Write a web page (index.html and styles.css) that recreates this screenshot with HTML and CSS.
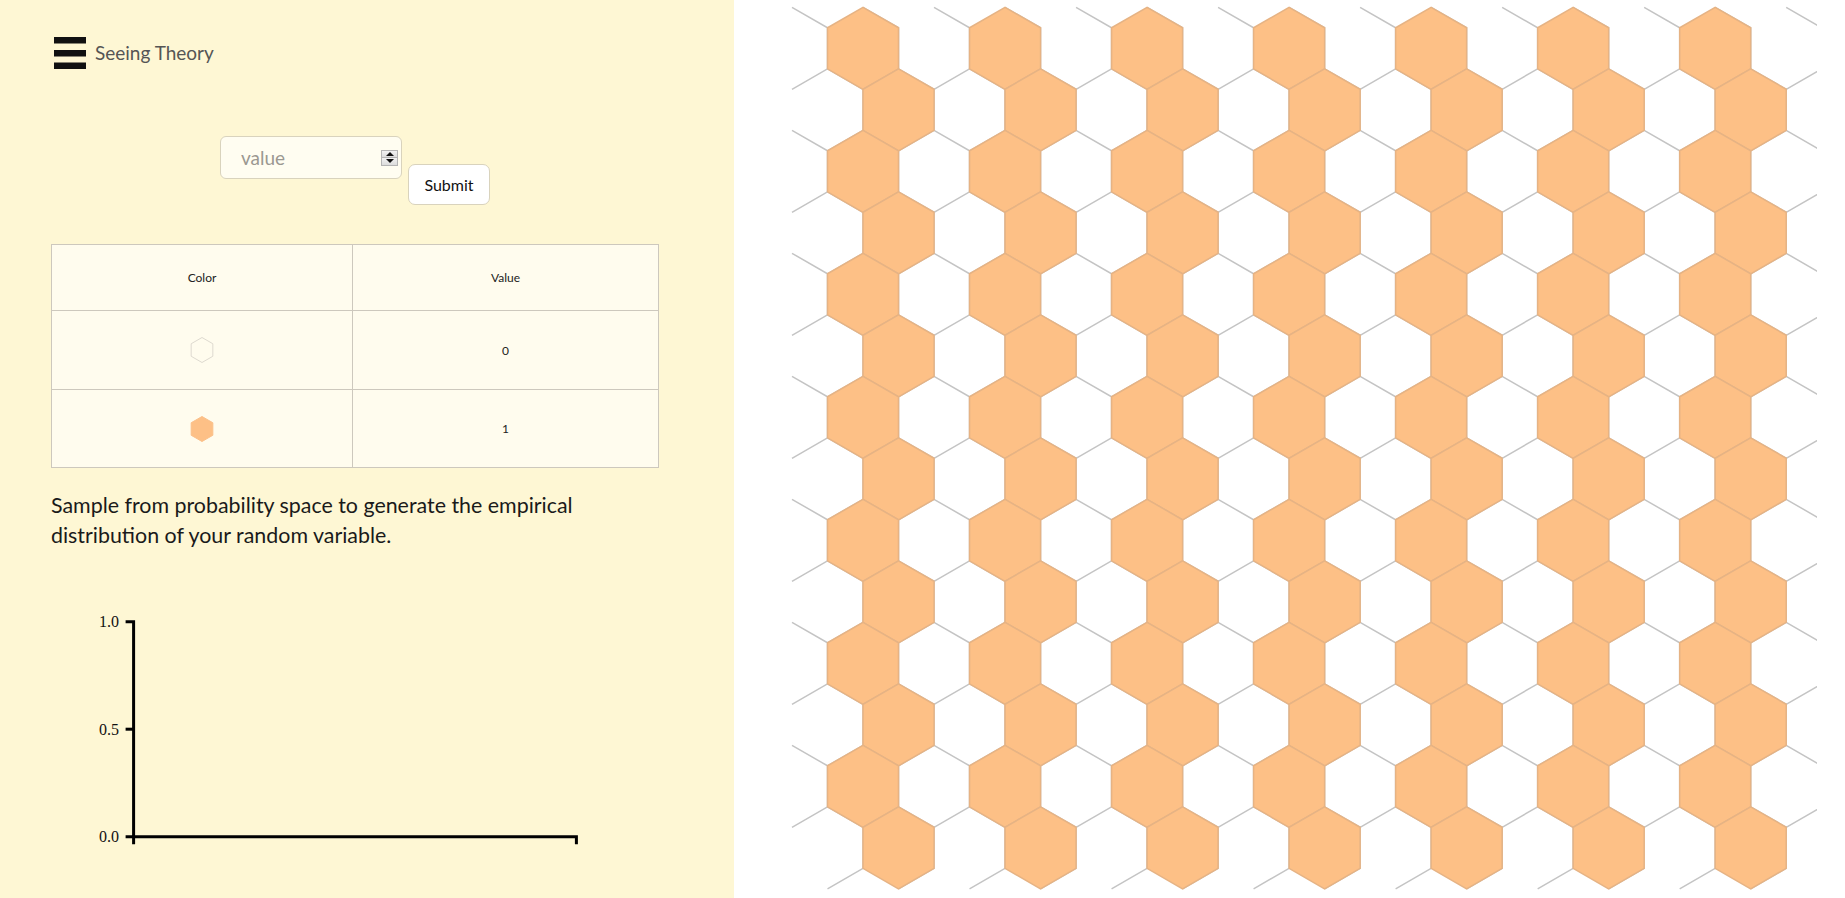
FILE: index.html
```html
<!DOCTYPE html>
<html lang="en">
<head>
<meta charset="utf-8">
<title>Seeing Theory</title>
<link rel="stylesheet" href="styles.css">
</head>
<body>
<div class="page">
  <aside class="sidebar">
    <nav class="nav">
      <svg class="menu-icon" width="32" height="32" viewBox="0 0 32 32">
        <rect x="0" y="0" width="32" height="6.5" fill="#111"/>
        <rect x="0" y="13" width="32" height="6.5" fill="#111"/>
        <rect x="0" y="25.5" width="32" height="6.5" fill="#111"/>
      </svg>
      <span class="brand">Seeing Theory</span>
    </nav>

    <div class="controls">
      <div class="field">
        <input class="field-input" type="text" placeholder="value">
        <span class="spinner">
          <span class="spin-btn"><span class="tri-up"></span></span>
          <span class="spin-btn"><span class="tri-down"></span></span>
        </span>
      </div>
      <button class="submit" type="button">Submit</button>
    </div>

    <table class="legend">
      <thead>
        <tr class="head-row"><th class="col-color">Color</th><th>Value</th></tr>
      </thead>
      <tbody>
        <tr class="row-a">
          <td>
            <svg width="26" height="28" viewBox="-13 -14 26 28"><polygon class="hex-empty" points="0,-12.5 10.83,-6.25 10.83,6.25 0,12.5 -10.83,6.25 -10.83,-6.25"/></svg>
          </td>
          <td>0</td>
        </tr>
        <tr class="row-b">
          <td>
            <svg width="26" height="28" viewBox="-13 -14 26 28"><polygon class="hex-full" points="0,-12.5 10.83,-6.25 10.83,6.25 0,12.5 -10.83,6.25 -10.83,-6.25"/></svg>
          </td>
          <td>1</td>
        </tr>
      </tbody>
    </table>

    <p class="desc">Sample from probability space to generate the empirical distribution of your random variable.</p>

    <svg class="chart" width="560" height="260" viewBox="0 0 560 260">
      <g class="axis">
        <path d="M74.6,20.7H82.6V235.7H74.6"/>
        <path d="M74.6,128.2H82.6"/>
        <path d="M82.6,243.3V235.7H525.4V243.3"/>
      </g>
      <g class="axis-labels">
        <text x="68" y="20.7" dy="0.34em">1.0</text>
        <text x="68" y="128.2" dy="0.34em">0.5</text>
        <text x="68" y="235.7" dy="0.34em">0.0</text>
      </g>
    </svg>
  </aside>

  <main class="stage">
    <svg class="hexgrid" width="1111" height="898" viewBox="734 0 1111 898">
      <defs>
        <clipPath id="gridclip"><rect x="791" y="0" width="1026" height="898"/></clipPath>
      </defs>
      <g clip-path="url(#gridclip)">
        <path id="mesh" class="mesh" d=""/>
        <g id="cells"></g>
      </g>
    </svg>
  </main>
</div>
<script src="script.js"></script>
</body>
</html>
```

FILE: styles.css
```css
html, body {
  margin: 0;
  padding: 0;
  background: #ffffff;
}

.page {
  display: flex;
  width: 1845px;
  height: 898px;
  overflow: hidden;
}

.sidebar {
  width: 734px;
  height: 898px;
  flex: none;
  box-sizing: border-box;
  background: #fef7d4;
  padding: 37px 75px 0 51px;
  font-family: Lato, "Liberation Sans", sans-serif;
  color: #222;
}

.nav {
  display: flex;
  align-items: center;
  gap: 9px;
  padding-left: 3px;
  height: 32px;
}

.menu-icon {
  display: block;
  flex: none;
}

.brand {
  font-size: 19px;
  color: #555;
  line-height: 32px;
}

.controls {
  display: flex;
  justify-content: center;
  align-items: flex-start;
  margin-top: 67px;
  gap: 6px;
}

.field {
  width: 182px;
  height: 43px;
  box-sizing: border-box;
  border: 1px solid #d9d3bd;
  border-radius: 6px;
  background: #fffdf1;
  display: flex;
  align-items: center;
  padding: 0 3px 0 20px;
}

.field-input {
  flex: 1;
  min-width: 0;
  border: 0;
  outline: none;
  background: transparent;
  font-family: Lato, "Liberation Sans", sans-serif;
  font-size: 19px;
  color: #333;
  padding: 0;
}

.field-input::placeholder {
  color: #9b9891;
}

.spinner {
  width: 17px;
  height: 16px;
  display: flex;
  flex-direction: column;
}

.spin-btn {
  flex: 1;
  box-sizing: border-box;
  border: 1px solid #b4b4b4;
  background: linear-gradient(#f2f2f2, #dcdcdc);
  display: flex;
  align-items: center;
  justify-content: center;
}

.spin-btn + .spin-btn {
  border-top: 0;
}

.tri-up {
  width: 0;
  height: 0;
  border-left: 4px solid transparent;
  border-right: 4px solid transparent;
  border-bottom: 4px solid #111;
}

.tri-down {
  width: 0;
  height: 0;
  border-left: 4px solid transparent;
  border-right: 4px solid transparent;
  border-top: 4px solid #111;
}

.submit {
  margin-top: 28px;
  width: 82px;
  height: 41px;
  box-sizing: border-box;
  border: 1px solid #d9d3bd;
  border-radius: 7px;
  background: #ffffff;
  font-family: Lato, "Liberation Sans", sans-serif;
  font-size: 16px;
  color: #111;
  padding: 0;
}

.legend {
  margin-top: 39px;
  width: 608px;
  border-collapse: collapse;
  background: #fffcee;
  border: 1px solid #cdc8bd;
  font-size: 12px;
  color: #222;
}

.legend th,
.legend td {
  border: 1px solid #cdc8bd;
  text-align: center;
  vertical-align: middle;
  padding: 0;
  font-weight: normal;
}

.legend svg {
  display: block;
  margin: 0 auto;
}

.col-color {
  width: 300px;
}

.head-row th {
  height: 65px;
}

.row-a td {
  height: 78px;
}

.row-b td {
  height: 77px;
}

.hex-empty {
  fill: none;
  stroke: #dedad0;
  stroke-width: 1;
}

.hex-full {
  fill: #fdc086;
  stroke: #fbc08a;
  stroke-width: 1;
}

.desc {
  margin: 22px 0 0 0;
  width: 600px;
  font-size: 21.4px;
  line-height: 30px;
  color: #1a1a1a;
}

.chart {
  display: block;
  margin-top: 51px;
  overflow: visible;
}

.axis path {
  fill: none;
  stroke: #000;
  stroke-width: 3;
}

.axis-labels text {
  font-family: "Liberation Serif", serif;
  font-size: 16px;
  fill: #111;
  text-anchor: end;
}

.stage {
  flex: 1;
  height: 898px;
  background: #ffffff;
}

.hexgrid {
  display: block;
}

.mesh {
  fill: none;
  stroke: #c4c4c4;
  stroke-width: 1.5;
}

.cell {
  fill: #fdc086;
  stroke: #e6b384;
  stroke-width: 1.5;
}
```

FILE: script.js
```js
(function () {
  var R = 41;
  var dx = Math.sqrt(3) * R;
  var dy = 1.5 * R;
  var x0 = 792;
  var y0 = 48.3;
  var rows = 14;
  var cols = 15;
  var ns = "http://www.w3.org/2000/svg";
  var mesh = "";
  var cells = document.getElementById("cells");

  function f(n) { return n.toFixed(2); }

  for (var r = 0; r < rows; r++) {
    for (var c = 0; c < cols; c++) {
      var cx = x0 + c * dx + (r % 2 ? dx / 2 : 0);
      var cy = y0 + r * dy;
      mesh += "M" + f(cx) + "," + f(cy - R) +
              "L" + f(cx + dx / 2) + "," + f(cy - R / 2) +
              "L" + f(cx + dx / 2) + "," + f(cy + R / 2) +
              "L" + f(cx) + "," + f(cy + R);
    }
  }
  document.getElementById("mesh").setAttribute("d", mesh);

  for (var r2 = 0; r2 < rows; r2++) {
    for (var c2 = 1; c2 < cols; c2 += 2) {
      var hx = x0 + c2 * dx + (r2 % 2 ? dx / 2 : 0);
      var hy = y0 + r2 * dy;
      var pts = [
        [hx, hy - R],
        [hx + dx / 2, hy - R / 2],
        [hx + dx / 2, hy + R / 2],
        [hx, hy + R],
        [hx - dx / 2, hy + R / 2],
        [hx - dx / 2, hy - R / 2]
      ].map(function (p) { return f(p[0]) + "," + f(p[1]); }).join(" ");
      var poly = document.createElementNS(ns, "polygon");
      poly.setAttribute("points", pts);
      poly.setAttribute("class", "cell");
      cells.appendChild(poly);
    }
  }
})();
```
